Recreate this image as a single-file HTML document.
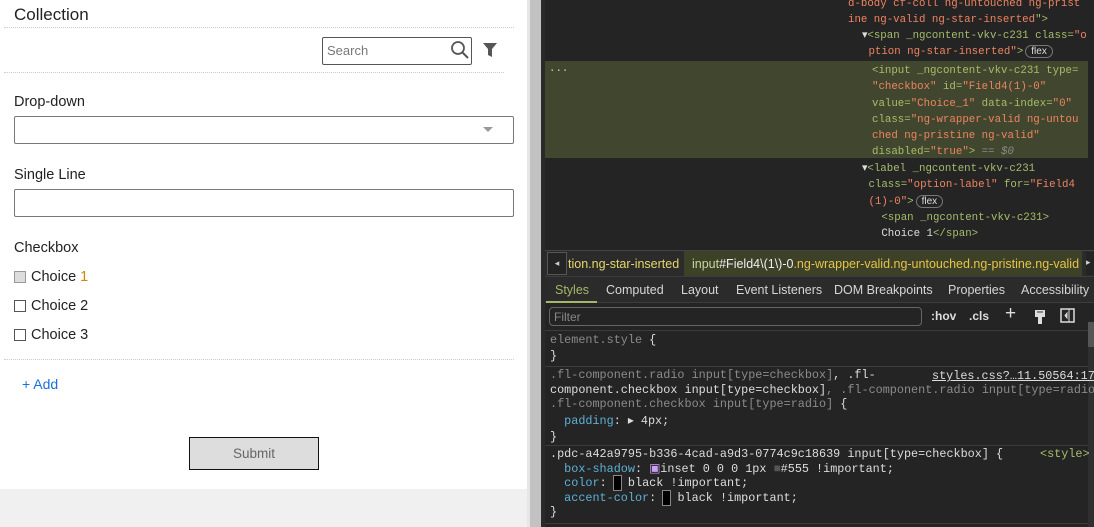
<!DOCTYPE html>
<html><head><style>
*{margin:0;padding:0;box-sizing:border-box}
body{width:1094px;height:527px;overflow:hidden;position:relative;background:#242424;font-family:"Liberation Sans",sans-serif}
.a{position:absolute}
.lp{left:0;top:0;width:527px;height:489px;background:#fff}
.lg{left:0;top:489px;width:527px;height:38px;background:#f0f0f0}
.lbl{font-size:14.5px;color:#222}
.mono{font-family:"Liberation Mono",monospace;font-size:11.8px;white-space:pre;line-height:16px}
.dom{font-size:10.75px;line-height:16.3px}
.o{color:#ee8461}.g{color:#a6bd6b}.w{color:#ddd}.gr{color:#8b8b8b}.b{color:#5db0d7}
.flex{display:inline-block;border:1px solid #777;border-radius:7px;font-size:10px;line-height:11px;padding:0 5px;color:#ddd;font-family:"Liberation Sans",sans-serif;vertical-align:0px;margin-left:2px}
.tab{font-size:12.5px;color:#d6d6d6;top:283px}
.cb{width:12px;height:12px;border:1px solid #555;background:#fff}
.hr{border-top:1px solid #3c3c3c;left:545px;width:543px}
</style></head><body>
<div class="a lp"></div><div class="a lg"></div>
<div class="a" style="left:527px;top:0;width:3px;height:527px;background:#e6e6e6"></div>
<div class="a" style="left:530px;top:0;width:11px;height:527px;background:#c2c2c2"></div>
<div class="a" style="left:541px;top:0;width:4px;height:527px;background:#2a2a2a"></div>

<div class="a lbl" style="left:14px;top:5px;font-size:17px">Collection</div>
<div class="a" style="left:4px;top:27px;width:510px;border-top:1px dotted #ccc"></div>
<div class="a" style="left:322px;top:37px;width:150px;height:28px;border:1px solid #555;border-radius:2px"></div>
<div class="a" style="left:327px;top:43px;font-size:13px;color:#777">Search</div>
<svg class="a" style="left:450px;top:40px" width="20" height="20" viewBox="0 0 20 20"><circle cx="8" cy="8" r="6" fill="none" stroke="#555" stroke-width="1.8"/><path d="M12.5 12.5L18 18" stroke="#555" stroke-width="2"/></svg>
<svg class="a" style="left:482px;top:42px" width="16" height="16" viewBox="0 0 16 16"><path d="M1 1H15L10 7V15L6 13V7Z" fill="#555"/></svg>
<div class="a" style="left:4px;top:72px;width:500px;border-top:1px dotted #ccc"></div>
<div class="a lbl" style="left:14px;top:94px">Drop-down</div>
<div class="a" style="left:14px;top:116px;width:500px;height:28px;border:1px solid #777;border-radius:2px"></div>
<div class="a" style="left:483px;top:127px;border-left:5px solid transparent;border-right:5px solid transparent;border-top:5px solid #999"></div>
<div class="a lbl" style="left:14px;top:167px">Single Line</div>
<div class="a" style="left:14px;top:189px;width:500px;height:28px;border:1px solid #777;border-radius:2px"></div>
<div class="a lbl" style="left:14px;top:240px">Checkbox</div>
<div class="a cb" style="left:14px;top:271px;background:#ddd;border-color:#999"></div>
<div class="a lbl" style="left:31px;top:269px">Choice <span style="color:#c80">1</span></div>
<div class="a cb" style="left:14px;top:300px"></div>
<div class="a lbl" style="left:31px;top:298px">Choice 2</div>
<div class="a cb" style="left:14px;top:329px"></div>
<div class="a lbl" style="left:31px;top:327px">Choice 3</div>
<div class="a" style="left:4px;top:359px;width:510px;border-top:1px dotted #ccc"></div>
<div class="a" style="left:22px;top:376px;font-size:14px;color:#1a6fd6">+ Add</div>
<div class="a" style="left:189px;top:437px;width:130px;height:33px;border:1px solid #111;background:#ddd;text-align:center;line-height:31px;font-size:13.5px;color:#666">Submit</div>

<!-- devtools -->
<div class="a" style="left:545px;top:61px;width:543px;height:97px;background:#41472e"></div>
<div class="a mono dom" style="left:549px;top:61px;color:#ccc">...</div>
<div class="a mono dom" style="left:848px;top:-4px"><span class="o">d-body cf-coll ng-untouched ng-prist</span>
<span class="o">ine ng-valid ng-star-inserted</span><span class="g">"&gt;</span></div>
<div class="a mono dom" style="left:862px;top:28px"><span class="w">▾</span><span class="g">&lt;span _ngcontent-vkv-c231 class=</span><span class="o">"o</span>
 <span class="o">ption ng-star-inserted"</span><span class="g">&gt;</span><span class="flex">flex</span></div>
<div class="a mono dom" style="left:872px;top:63px"><span class="g">&lt;input _ngcontent-vkv-c231 type=</span>
<span class="o">"checkbox"</span><span class="g"> id=</span><span class="o">"Field4(1)-0"</span>
<span class="g">value=</span><span class="o">"Choice_1"</span><span class="g"> data-index=</span><span class="o">"0"</span>
<span class="g">class=</span><span class="o">"ng-wrapper-valid ng-untou</span>
<span class="o">ched ng-pristine ng-valid"</span>
<span class="g">disabled=</span><span class="o">"true"</span><span class="g">&gt;</span><span class="gr"> == <i>$0</i></span></div>
<div class="a mono dom" style="left:862px;top:161px"><span class="w">▾</span><span class="g">&lt;label _ngcontent-vkv-c231</span>
 <span class="g">class=</span><span class="o">"option-label"</span><span class="g"> for=</span><span class="o">"Field4</span>
 <span class="o">(1)-0"</span><span class="g">&gt;</span><span class="flex">flex</span>
   <span class="g">&lt;span _ngcontent-vkv-c231&gt;</span>
   <span class="w">Choice 1</span><span class="g">&lt;/span&gt;</span></div>

<div class="a" style="left:545px;top:250px;width:549px;height:27px;background:#2b2b2b;border-top:1px solid #444;border-bottom:1px solid #3c3c3c"></div>
<div class="a" style="left:547px;top:252px;width:20px;height:23px;background:#242424;border:1px solid #555;color:#ccc;font-size:9px;text-align:center;line-height:21px">◂</div>
<div class="a" style="left:568px;top:257px;font-size:12.5px;color:#e4d86a;width:115px;white-space:nowrap">tion.ng-star-inserted</div>
<div class="a" style="left:684px;top:251px;width:398px;height:25px;background:#3c4128"></div>
<div class="a" style="left:692px;top:257px;font-size:12.5px;white-space:nowrap"><span style="color:#c8d6a0">input</span><span style="color:#eee">#Field4\(1\)-0</span><span style="color:#e6c34a">.ng-wrapper-valid.ng-untouched.ng-pristine.ng-valid</span></div>
<div class="a" style="left:1086px;top:252px;width:8px;height:23px;background:#242424;color:#ccc;font-size:9px;line-height:21px">▸</div>

<div class="a" style="left:545px;top:277px;width:549px;height:26px;background:#2b2b2b;border-bottom:1px solid #3c3c3c"></div>
<div class="a" style="left:546px;top:301px;width:51px;height:2px;background:#a2b865"></div>
<div class="a tab" style="left:555px;color:#a2b865">Styles</div>
<div class="a tab" style="left:606px">Computed</div>
<div class="a tab" style="left:681px">Layout</div>
<div class="a tab" style="left:736px">Event Listeners</div>
<div class="a tab" style="left:834px">DOM Breakpoints</div>
<div class="a tab" style="left:948px">Properties</div>
<div class="a tab" style="left:1021px">Accessibility</div>

<div class="a" style="left:549px;top:307px;width:373px;height:19px;border:1px solid #666;border-radius:4px"></div>
<div class="a" style="left:554px;top:310px;font-size:12px;color:#888">Filter</div>
<div class="a" style="left:931px;top:309px;font-size:12px;color:#ddd;font-weight:bold">:hov</div>
<div class="a" style="left:969px;top:309px;font-size:12px;color:#ddd;font-weight:bold">.cls</div>
<div class="a" style="left:1005px;top:303px;font-size:19px;color:#ddd">+</div>
<svg class="a" style="left:1033px;top:309px" width="14" height="16" viewBox="0 0 14 16"><path d="M2 1H12V8H2Z M5 8H9V15H5Z" fill="#ddd"/><path d="M4 3H10" stroke="#333"/></svg>
<svg class="a" style="left:1060px;top:308px" width="15" height="15" viewBox="0 0 15 15"><rect x="1" y="1" width="13" height="13" fill="none" stroke="#ddd" stroke-width="1.5"/><path d="M9 1V14M5 7.5L7 5V10Z" stroke="#ddd" fill="#ddd"/></svg>
<div class="a hr" style="top:330px"></div>
<div class="a" style="left:1088px;top:330px;width:6px;height:197px;background:#2f2f2f"></div>
<div class="a" style="left:1088px;top:322px;width:6px;height:25px;background:#555"></div>

<div class="a mono" style="left:550px;top:332px"><span class="gr">element.style</span><span class="w"> {</span>
<span class="w">}</span></div>
<div class="a hr" style="top:366px"></div>
<div class="a mono" style="left:550px;top:368px;line-height:14.5px"><span class="gr">.fl-component.radio input[type=checkbox]</span><span class="w">, .fl-</span>
<span class="w">component.checkbox input[type=checkbox]</span><span class="gr">, .fl-component.radio input[type=radio],</span>
<span class="gr">.fl-component.checkbox input[type=radio]</span><span class="w"> {</span></div>
<div class="a mono" style="left:932px;top:368px;color:#ddd;text-decoration:underline">styles.css?…11.50564:17</div>
<div class="a mono" style="left:550px;top:413px"><span class="b">  padding</span><span class="w">: ▸ 4px;</span>
<span class="w">}</span></div>
<div class="a hr" style="top:445px"></div>
<div class="a mono" style="left:550px;top:447px;line-height:14.5px"><span class="w">.pdc-a42a9795-b336-4cad-a9d3-0774c9c18639 input[type=checkbox] {</span>
<span class="b">  box-shadow</span><span class="w">: <span style="color:#c99ff0">▣</span>inset 0 0 0 1px <span style="color:#555">■</span>#555 !important;</span>
<span class="b">  color</span><span class="w">: <span style="color:#000;background:#000;outline:1px solid #888">■</span> black !important;</span>
<span class="b">  accent-color</span><span class="w">: <span style="color:#000;background:#000;outline:1px solid #888">■</span> black !important;</span>
<span class="w">}</span></div>
<div class="a" style="left:1040px;top:447px;font-family:'Liberation Mono',monospace;font-size:11.8px;color:#a6bd6b">&lt;style&gt;</div>
<div class="a hr" style="top:523px"></div>
</body></html>
